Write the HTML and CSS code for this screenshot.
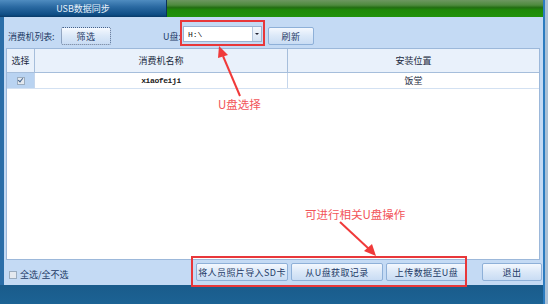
FILE: index.html
```html
<!DOCTYPE html>
<html>
<head>
<meta charset="utf-8">
<link rel="stylesheet" href="styles.css">
</head>
<body>
<div class="screen">
  <div class="main">
    <div class="tabbar">
      <div class="tab">USB数据同步</div>
      <div class="greenbar"></div>
    </div>
    <div class="panel">
      <div class="toolbar">
        <span class="label llist">消费机列表:</span>
        <button class="btn btn-filter">筛选</button>
        <span class="label ulabel">U盘:</span>
        <div class="combo"><span class="combo-text">H:\</span><span class="combo-arrow"></span></div>
        <button class="btn btn-refresh">刷新</button>
      </div>
      <div class="table">
        <div class="row head">
          <div class="cell">选择</div>
          <div class="cell">消费机名称</div>
          <div class="cell last">安装位置</div>
        </div>
        <div class="row data">
          <div class="cell sel"><span class="chk checked"></span></div>
          <div class="cell mono">xiaofeiji</div>
          <div class="cell last">饭堂</div>
        </div>
      </div>
      <div class="bottombar">
        <label class="selall"><span class="chk"></span>全选/全不选</label>
        <div class="actions">
          <button class="btn b1">将人员照片导入SD卡</button>
          <button class="btn b2">从U盘获取记录</button>
          <button class="btn b3">上传数据至U盘</button>
          <button class="btn b4">退出</button>
        </div>
      </div>
    </div>
    <div class="footer"></div>
  </div>
  <div class="rightedge"></div>

  <div class="redbox rb1"></div>
  <div class="redbox rb2"></div>
  <div class="note n1">U盘选择</div>
  <div class="note n2">可进行相关U盘操作</div>
  <svg class="arrows" width="548" height="304" viewBox="0 0 548 304">
    <line x1="240" y1="96" x2="223" y2="56" stroke="#f03a3a" stroke-width="2"/>
    <polygon points="219,46 218,58 228,55" fill="#f03a3a"/>
    <line x1="340" y1="222" x2="369" y2="249" stroke="#f03a3a" stroke-width="2"/>
    <polygon points="376,256 364,251 372,244" fill="#f03a3a"/>
  </svg>
</div>
</body>
</html>
```
FILE: styles.css
```css
* { box-sizing: border-box; }
html, body { margin: 0; padding: 0; }
body {
  width: 548px; height: 304px; overflow: hidden;
  font-family: "Noto Sans CJK SC", "Liberation Sans", sans-serif;
  font-size: 9px;
  color: #1d3a66;
  background: #1b5e8d;
}
.screen { position: relative; display: flex; width: 548px; height: 304px; }
.main { width: 543px; display: flex; flex-direction: column; }
.rightedge {
  width: 5px;
  border-left: 2px solid #2c7cc0;
  background: #a9c0d6;
}
.tabbar { height: 17px; display: flex; }
.tab {
  width: 167px;
  background: linear-gradient(#4f8cc0 0%, #2b6aa2 40%, #0f4e86 85%, #083a68 100%);
  color: #e8f1fb;
  font-size: 9px;
  display: flex; align-items: center; justify-content: center;
  border-right: 1px solid #0b3358;
}
.greenbar {
  flex: 1;
  background: linear-gradient(#6d9761 0%, #4e8a3e 30%, #226e12 45%, #1f8a08 60%, #21920a 100%);
}
.panel {
  height: 268px;
  background: #c4daf4;
  border-left: 4px solid #2b6ea8;
  padding: 0 1px 0 2px;
  display: flex; flex-direction: column;
}
.toolbar {
  height: 31px;
  display: flex; align-items: center;
  padding: 7px 0 0 2px;
}
.label { color: #1d3a66; white-space: nowrap; }
.llist { width: 53px; letter-spacing: -0.2px; }
.btn {
  font-family: inherit; font-size: 9px; color: #1d3a66;
  height: 18px; padding: 0; white-space: nowrap;
  border: 1px solid #8eb0d8; border-radius: 2px;
  background: linear-gradient(#f4f8fe 0%, #dbe8f8 50%, #c9dcf4 100%);
  display: flex; align-items: center; justify-content: center;
  letter-spacing: 0.4px;
}
.btn-filter { width: 50px; border: 1px dotted #44618a; }
.ulabel { width: 20px; margin-left: 52px; }
.combo {
  width: 79px; height: 16px; margin-top: -4px;
  background: #fff; border: 1px solid #9ab3d2;
  display: flex; align-items: center; justify-content: space-between;
}
.combo-text { font-family: "Liberation Mono", monospace; font-size: 8px; padding-left: 4px; color: #111; }
.combo-arrow {
  width: 9px; height: 14px; border-left: 1px solid #b7c9e0;
  background: linear-gradient(#f3f7fc, #d6e3f3);
  position: relative;
}
.combo-arrow::after {
  content: ""; position: absolute; left: 2px; top: 6px;
  border-left: 2px solid transparent; border-right: 2px solid transparent; border-top: 2px solid #223;
}
.btn-refresh { width: 46px; margin-left: 6px; }
.table {
  height: 212px;
  background: #fff;
  border: 1px solid #9cb8da;
  margin-right: 2px;
}
.row { display: grid; grid-template-columns: 28px 253px 1fr; }
.head { height: 24px; background: #e9f1fb; border-bottom: 1px solid #a6bedb; }
.data { height: 16px; border-bottom: 1px solid #d3e1f2; }
.cell {
  display: flex; align-items: center; justify-content: center;
  border-right: 1px solid #c5d6ec;
  color: #1a2a40;
}
.cell.last { border-right: none; }
.head .cell { border-right-color: #a6bedb; }
.sel { background: #b9d3f1; }
.mono { font-family: "Liberation Mono", monospace; font-size: 8px; letter-spacing: -0.4px; color: #222; font-weight: bold; }
.chk {
  display: inline-block; width: 8px; height: 8px;
  border: 1px solid #9aacbf; background: #e4e9ef;
}
.chk.checked { position: relative; }
.chk.checked::after {
  content: ""; position: absolute; left: 1px; top: -1px; width: 2px; height: 4px;
  border-right: 1px solid #44658f; border-bottom: 1px solid #44658f; transform: rotate(40deg);
}
.bottombar {
  flex: 1; display: flex; align-items: flex-start; justify-content: space-between;
  padding: 3px 0 0 3px;
}
.selall { display: flex; align-items: center; gap: 3px; color: #1d3a66; margin-top: 5px; }
.actions { display: flex; }
.b1 { width: 92px; }
.b2 { width: 92px; margin-left: 3px; }
.b3 { width: 81px; margin-left: 3px; }
.b4 { width: 60px; margin-left: 15px; }
.footer { flex: 1; background: linear-gradient(#1a5b8b, #1c6394); }
.redbox { position: absolute; border: 2px solid #e8373a; }
.rb1 { left: 180px; top: 20px; width: 85px; height: 26px; }
.rb2 { left: 191px; top: 256px; width: 276px; height: 31px; }
.note { position: absolute; color: #f2555a; font-size: 11.5px; }
.n1 { left: 218px; top: 96px; }
.n2 { left: 305px; top: 206px; }
.arrows { position: absolute; left: 0; top: 0; pointer-events: none; }
```
